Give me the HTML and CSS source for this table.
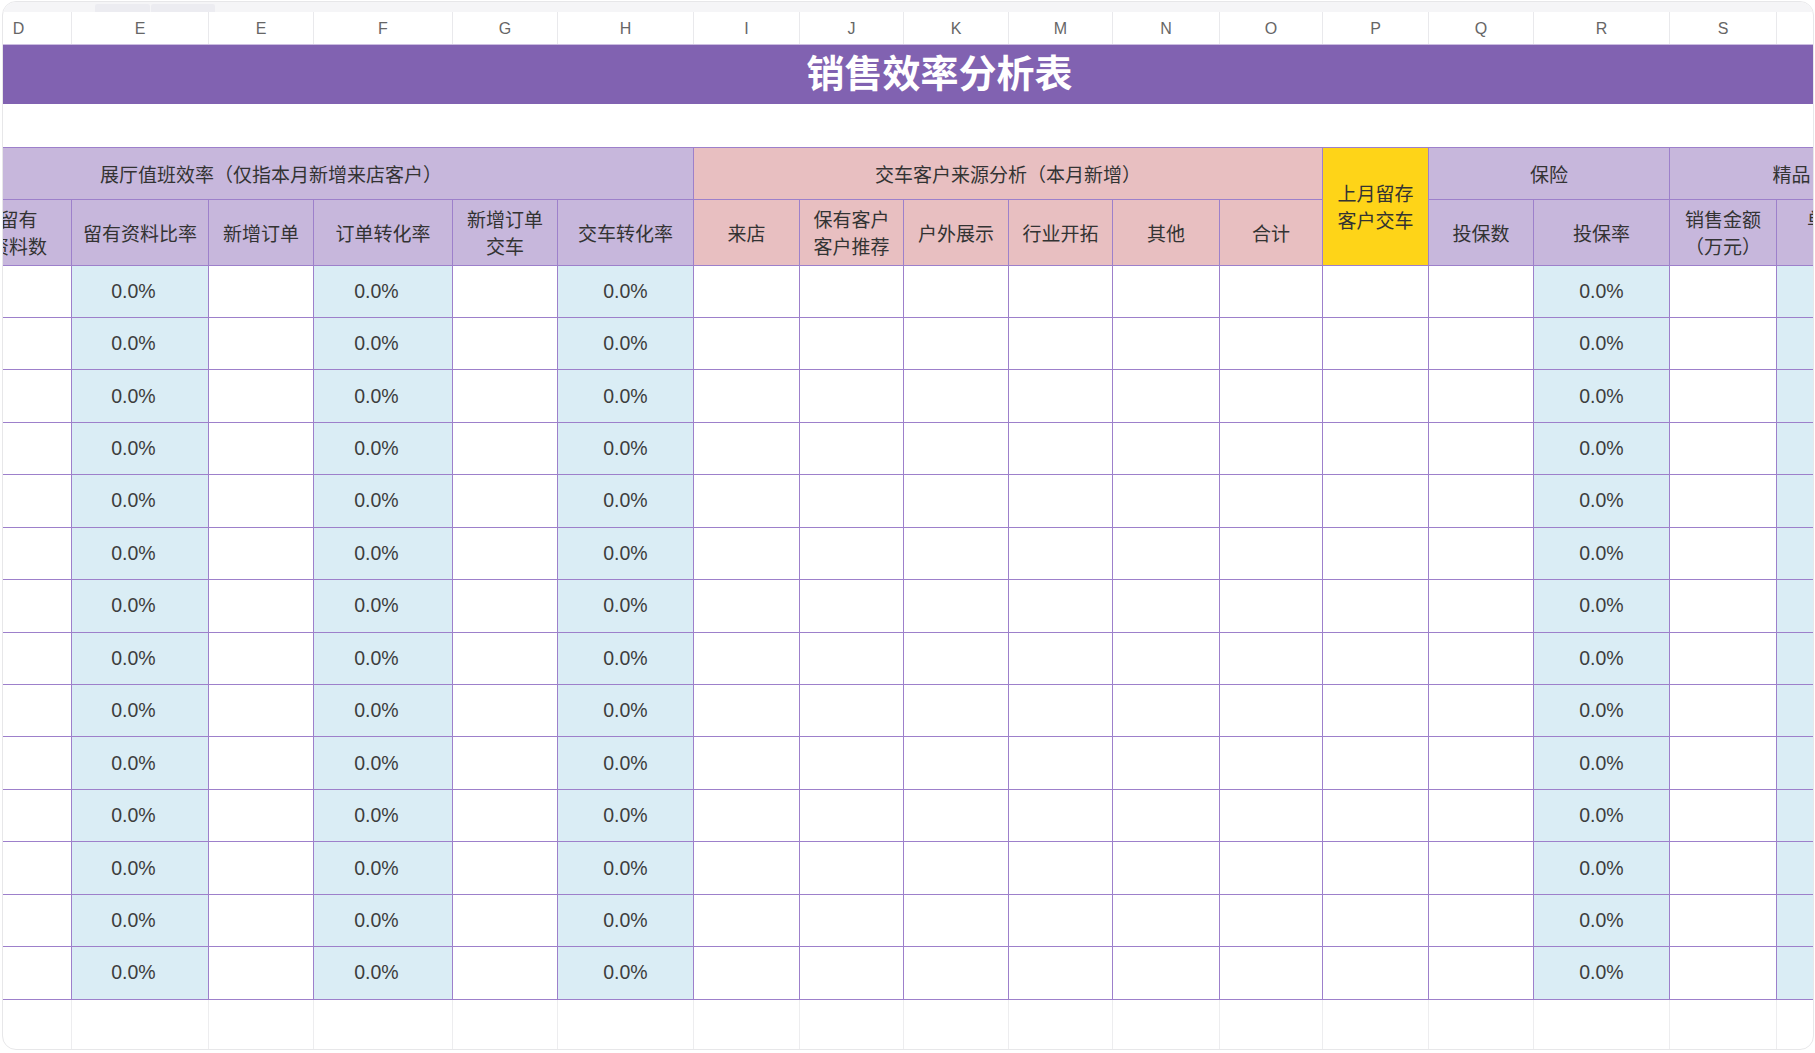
FILE: index.html
```html
<!DOCTYPE html>
<html lang="zh-CN">
<head>
<meta charset="utf-8">
<title>销售效率分析表</title>
<link rel="stylesheet" href="styles.css">
</head>
<body>
<div class="card">
  <div class="strip"><span class="tab tab1"></span><span class="tab tab2"></span></div>
  <div class="sheet">
    <table class="grid">
      <colgroup>
        <col class="w117"><col class="w106"><col class="w137"><col class="w105"><col class="w139"><col class="w105"><col class="w136"><col class="w106"><col class="w104"><col class="w105"><col class="w104"><col class="w107"><col class="w103"><col class="w106"><col class="w105"><col class="w136"><col class="w107"><col class="w137"><col class="w117">
      </colgroup>
      <tr class="letters">
        <td>C</td><td>D</td><td>E</td><td>E</td><td>F</td><td>G</td><td>H</td><td>I</td><td>J</td><td>K</td><td>M</td><td>N</td><td>O</td><td>P</td><td>Q</td><td>R</td><td>S</td><td>T</td><td>U</td>
      </tr>
      <tr class="title-row"><td colspan="19">销售效率分析表</td></tr>
      <tr class="gap-row"><td colspan="19"></td></tr>
      <tr class="group-row">
        <td colspan="7" class="lav">展厅值班效率（仅指本月新增来店客户）</td>
        <td colspan="6" class="pink">交车客户来源分析（本月新增）</td>
        <td rowspan="2" class="yel">上月留存<br>客户交车</td>
        <td colspan="2" class="lav">保险</td>
        <td colspan="2" class="lav">精品</td>
        <td class="lav"></td>
      </tr>
      <tr class="sub-row">
        <td class="lav">来店数</td>
        <td class="lav">留有<br>资料数</td>
        <td class="lav">留有资料比率</td>
        <td class="lav">新增订单</td>
        <td class="lav">订单转化率</td>
        <td class="lav">新增订单<br>交车</td>
        <td class="lav">交车转化率</td>
        <td class="pink">来店</td>
        <td class="pink">保有客户<br>客户推荐</td>
        <td class="pink">户外展示</td>
        <td class="pink">行业开拓</td>
        <td class="pink">其他</td>
        <td class="pink">合计</td>
        <td class="lav">投保数</td>
        <td class="lav">投保率</td>
        <td class="lav">销售金额<br>（万元）</td>
        <td class="lav">单车精品<br>金额</td>
        <td class="lav">备注</td>
      </tr>
      <tr class="data-row"><td></td><td></td><td class="rate sh">0.0%</td><td></td><td class="rate sh">0.0%</td><td></td><td class="rate">0.0%</td><td></td><td></td><td></td><td></td><td></td><td></td><td></td><td></td><td class="rate">0.0%</td><td></td><td class="rate">0.0%</td><td></td></tr>
      <tr class="data-row"><td></td><td></td><td class="rate sh">0.0%</td><td></td><td class="rate sh">0.0%</td><td></td><td class="rate">0.0%</td><td></td><td></td><td></td><td></td><td></td><td></td><td></td><td></td><td class="rate">0.0%</td><td></td><td class="rate">0.0%</td><td></td></tr>
      <tr class="data-row"><td></td><td></td><td class="rate sh">0.0%</td><td></td><td class="rate sh">0.0%</td><td></td><td class="rate">0.0%</td><td></td><td></td><td></td><td></td><td></td><td></td><td></td><td></td><td class="rate">0.0%</td><td></td><td class="rate">0.0%</td><td></td></tr>
      <tr class="data-row"><td></td><td></td><td class="rate sh">0.0%</td><td></td><td class="rate sh">0.0%</td><td></td><td class="rate">0.0%</td><td></td><td></td><td></td><td></td><td></td><td></td><td></td><td></td><td class="rate">0.0%</td><td></td><td class="rate">0.0%</td><td></td></tr>
      <tr class="data-row"><td></td><td></td><td class="rate sh">0.0%</td><td></td><td class="rate sh">0.0%</td><td></td><td class="rate">0.0%</td><td></td><td></td><td></td><td></td><td></td><td></td><td></td><td></td><td class="rate">0.0%</td><td></td><td class="rate">0.0%</td><td></td></tr>
      <tr class="data-row"><td></td><td></td><td class="rate sh">0.0%</td><td></td><td class="rate sh">0.0%</td><td></td><td class="rate">0.0%</td><td></td><td></td><td></td><td></td><td></td><td></td><td></td><td></td><td class="rate">0.0%</td><td></td><td class="rate">0.0%</td><td></td></tr>
      <tr class="data-row"><td></td><td></td><td class="rate sh">0.0%</td><td></td><td class="rate sh">0.0%</td><td></td><td class="rate">0.0%</td><td></td><td></td><td></td><td></td><td></td><td></td><td></td><td></td><td class="rate">0.0%</td><td></td><td class="rate">0.0%</td><td></td></tr>
      <tr class="data-row"><td></td><td></td><td class="rate sh">0.0%</td><td></td><td class="rate sh">0.0%</td><td></td><td class="rate">0.0%</td><td></td><td></td><td></td><td></td><td></td><td></td><td></td><td></td><td class="rate">0.0%</td><td></td><td class="rate">0.0%</td><td></td></tr>
      <tr class="data-row"><td></td><td></td><td class="rate sh">0.0%</td><td></td><td class="rate sh">0.0%</td><td></td><td class="rate">0.0%</td><td></td><td></td><td></td><td></td><td></td><td></td><td></td><td></td><td class="rate">0.0%</td><td></td><td class="rate">0.0%</td><td></td></tr>
      <tr class="data-row"><td></td><td></td><td class="rate sh">0.0%</td><td></td><td class="rate sh">0.0%</td><td></td><td class="rate">0.0%</td><td></td><td></td><td></td><td></td><td></td><td></td><td></td><td></td><td class="rate">0.0%</td><td></td><td class="rate">0.0%</td><td></td></tr>
      <tr class="data-row"><td></td><td></td><td class="rate sh">0.0%</td><td></td><td class="rate sh">0.0%</td><td></td><td class="rate">0.0%</td><td></td><td></td><td></td><td></td><td></td><td></td><td></td><td></td><td class="rate">0.0%</td><td></td><td class="rate">0.0%</td><td></td></tr>
      <tr class="data-row"><td></td><td></td><td class="rate sh">0.0%</td><td></td><td class="rate sh">0.0%</td><td></td><td class="rate">0.0%</td><td></td><td></td><td></td><td></td><td></td><td></td><td></td><td></td><td class="rate">0.0%</td><td></td><td class="rate">0.0%</td><td></td></tr>
      <tr class="data-row"><td></td><td></td><td class="rate sh">0.0%</td><td></td><td class="rate sh">0.0%</td><td></td><td class="rate">0.0%</td><td></td><td></td><td></td><td></td><td></td><td></td><td></td><td></td><td class="rate">0.0%</td><td></td><td class="rate">0.0%</td><td></td></tr>
      <tr class="data-row"><td></td><td></td><td class="rate sh">0.0%</td><td></td><td class="rate sh">0.0%</td><td></td><td class="rate">0.0%</td><td></td><td></td><td></td><td></td><td></td><td></td><td></td><td></td><td class="rate">0.0%</td><td></td><td class="rate">0.0%</td><td></td></tr>
      <tr class="empty-row"><td></td><td></td><td></td><td></td><td></td><td></td><td></td><td></td><td></td><td></td><td></td><td></td><td></td><td></td><td></td><td></td><td></td><td></td><td></td></tr>
    </table>
  </div>
</div>
</body>
</html>
```

FILE: styles.css
```css
* { box-sizing: border-box; }
html, body { margin: 0; padding: 0; background: #ffffff; }
body {
  font-family: "Noto Sans CJK SC", "Noto Sans", sans-serif;
  color: #333333;
}
.card {
  margin: 1px 0 0 2px;
  width: 1812px;
  height: 1049px;
  border: 1px solid #e7e7e9;
  border-radius: 14px;
  overflow: hidden;
  background: #ffffff;
  display: flex;
  flex-direction: column;
}
.strip {
  height: 10px;
  flex: none;
  background: #f5f5f7;
  display: flex;
  align-items: flex-end;
  padding-left: 92px;
}
.tab {
  height: 8px;
  background: #ececf1;
  border-radius: 2px 2px 0 0;
}
.tab1 { width: 55px; }
.tab2 { width: 64px; margin-left: 1px; }
.sheet { flex: 1; overflow: hidden; }
.grid {
  border-collapse: collapse;
  table-layout: fixed;
  width: 2182px;
  margin-left: -155px;
}
.w103 { width: 103px; } .w104 { width: 104px; } .w105 { width: 105px; }
.w106 { width: 106px; } .w107 { width: 107px; } .w117 { width: 117px; }
.w136 { width: 136px; } .w137 { width: 137px; } .w139 { width: 139px; }
.grid td { padding: 0; text-align: center; vertical-align: middle; }

.letters td {
  height: 32px;
  font-family: "Liberation Sans", Arial, sans-serif;
  font-size: 16px;
  color: #666666;
  border-right: 1px solid #e9e9ec;
  border-bottom: 1px solid #cbbde0;
  padding-top: 2px;
}
.title-row td {
  height: 60px;
  background: #8162b1;
  color: #ffffff;
  font-size: 38px;
  font-weight: 700;
  line-height: 1;
  padding-bottom: 7px;
}
.gap-row td { height: 43px; background: #ffffff; }

.group-row td,
.sub-row td,
.data-row td {
  border: 1px solid #9d80cb;
  font-size: 19px;
  line-height: 27px;
  color: #333333;
}
.group-row td { height: 52px; }
.sub-row td { height: 66px; }
.lav { background: #c7b7dc; }
.pink { background: #e8bfc1; }
.yel { background: #fed418; }

.data-row td { height: 52.45px; background: #ffffff; }
.data-row td.rate {
  background: #daedf5;
  font-family: "Liberation Sans", Arial, sans-serif;
  font-size: 19.5px;
  color: #3d3d3d;
}
.data-row td.sh { padding-right: 13px; }

.empty-row td {
  height: 60px;
  border-left: 1px solid #ededef;
  border-right: 1px solid #ededef;
}
```
